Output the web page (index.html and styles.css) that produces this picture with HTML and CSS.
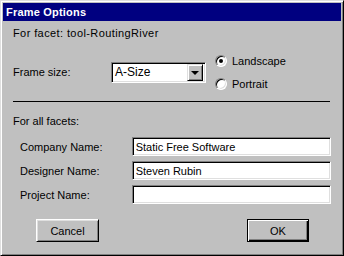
FILE: index.html
```html
<!DOCTYPE html>
<html lang="en">
<head>
    <meta charset="UTF-8">
    <title>Frame Options</title>
    <link rel="stylesheet" href="styles.css">
</head>
<body>

<div class="dialog">
    <div class="title">Frame Options</div>

    <div class="content">
        <p class="facet">For facet: tool-RoutingRiver</p>

        <div class="size-row">
            <label class="size-label" for="size">Frame size:</label>
            <div class="select" id="size">
                <span class="select-value">A-Size</span>
                <span class="select-arrow"><span class="tri"></span></span>
            </div>
            <div class="radios">
                <div class="radio-row">
                    <span class="radio checked"></span>
                    <span>Landscape</span>
                </div>
                <div class="radio-row">
                    <span class="radio"></span>
                    <span>Portrait</span>
                </div>
            </div>
        </div>

        <div class="rule"></div>

        <p class="all">For all facets:</p>

        <div class="fields">
            <div class="field">
                <label for="company">Company Name:</label>
                <input type="text" id="company" value="Static Free Software"/>
            </div>
            <div class="field">
                <label for="designer">Designer Name:</label>
                <input type="text" id="designer" value="Steven Rubin"/>
            </div>
            <div class="field">
                <label for="project">Project Name:</label>
                <input type="text" id="project" value=""/>
            </div>
        </div>

        <div class="buttons">
            <button type="button" class="btn">Cancel</button>
            <button type="button" class="btn default">OK</button>
        </div>
    </div>
</div>

</body>
</html>
```

FILE: styles.css
```css
body {
    margin: 0;
    background: #c0c0c0;
}

.dialog, input, button {
    font-family: "Liberation Sans", Arial, sans-serif;
    font-size: 11px;
    color: #000;
}

.dialog {
    width: 344px;
    height: 256px;
    box-sizing: border-box;
    background: #c0c0c0;
    border: 1px solid;
    border-color: #dfdfdf #000 #000 #dfdfdf;
    box-shadow: inset 1px 1px 0 #fff, inset -1px -1px 0 #808080;
    padding: 2px;
}

.title {
    height: 18px;
    line-height: 18px;
    background: #000080;
    color: #fff;
    font-weight: bold;
    letter-spacing: 0.2px;
    padding-left: 3px;
}

.content {
    padding: 0 10px 0 10px;
}

p {
    margin: 0;
    line-height: 14px;
}

.facet {
    margin-top: 5px;
    letter-spacing: 0.4px;
}

/* frame size row */
.size-row {
    display: flex;
    align-items: center;
    margin-top: 9px;
}

.size-label {
    width: 98px;
}

.select {
    width: 95px;
    height: 21px;
    box-sizing: border-box;
    background: #fff;
    border: 1px solid;
    border-color: #808080 #fff #fff #808080;
    box-shadow: inset 1px 1px 0 #000, inset -1px -1px 0 #dfdfdf;
    display: flex;
    align-items: center;
    padding: 2px;
}

.select-value {
    flex: 1;
    padding-left: 1px;
    font-size: 12px;
}

.select-arrow {
    width: 16px;
    height: 17px;
    box-sizing: border-box;
    background: #c0c0c0;
    border: 1px solid;
    border-color: #dfdfdf #000 #000 #dfdfdf;
    box-shadow: inset 1px 1px 0 #fff, inset -1px -1px 0 #808080;
    display: flex;
    align-items: center;
    justify-content: center;
}

.tri {
    width: 0;
    height: 0;
    border-left: 4px solid transparent;
    border-right: 4px solid transparent;
    border-top: 4px solid #000;
    margin-top: 1px;
}

.radios {
    margin-left: 9px;
}

.radio-row {
    height: 23px;
    display: flex;
    align-items: center;
    gap: 5px;
    font-size: 11px;
}

.radio {
    width: 12px;
    height: 12px;
    box-sizing: border-box;
    border-radius: 50%;
    background: #fff;
    border: 1px solid;
    border-color: #808080 #fff #fff #808080;
    box-shadow: inset 1px 1px 0 #000, inset -1px -1px 0 #dfdfdf;
    display: flex;
    align-items: center;
    justify-content: center;
}

.radio.checked::after {
    content: "";
    width: 4px;
    height: 4px;
    border-radius: 50%;
    background: #000;
}

.rule {
    height: 1px;
    background: #000;
    margin-top: 6px;
    margin-right: 1px;
}

.all {
    margin-top: 12px;
}

/* text fields */
.fields {
    display: flex;
    flex-direction: column;
    gap: 5px;
    margin-top: 9px;
    padding-left: 7px;
}

.field {
    display: flex;
    align-items: center;
}

.field label {
    width: 112px;
}

.field input {
    width: 200px;
    height: 19px;
    box-sizing: border-box;
    margin: 0;
    padding: 0 3px;
    background: #fff;
    border: 1px solid;
    border-color: #808080 #fff #fff #808080;
    box-shadow: inset 1px 1px 0 #000, inset -1px -1px 0 #dfdfdf;
    outline: none;
}

/* buttons */
.buttons {
    display: flex;
    justify-content: space-between;
    margin-top: 15px;
    padding: 0 22px 0 23px;
}

.btn {
    width: 63px;
    height: 23px;
    margin: 0;
    padding: 0;
    background: #c0c0c0;
    border: 1px solid;
    border-color: #fff #000 #000 #fff;
    box-shadow: inset 1px 1px 0 #dfdfdf, inset -1px -1px 0 #808080;
}

.btn.default {
    width: 62px;
    border-color: #000;
    box-shadow: inset 1px 1px 0 #fff, inset -1px -1px 0 #000, inset -2px -2px 0 #808080;
}
```
